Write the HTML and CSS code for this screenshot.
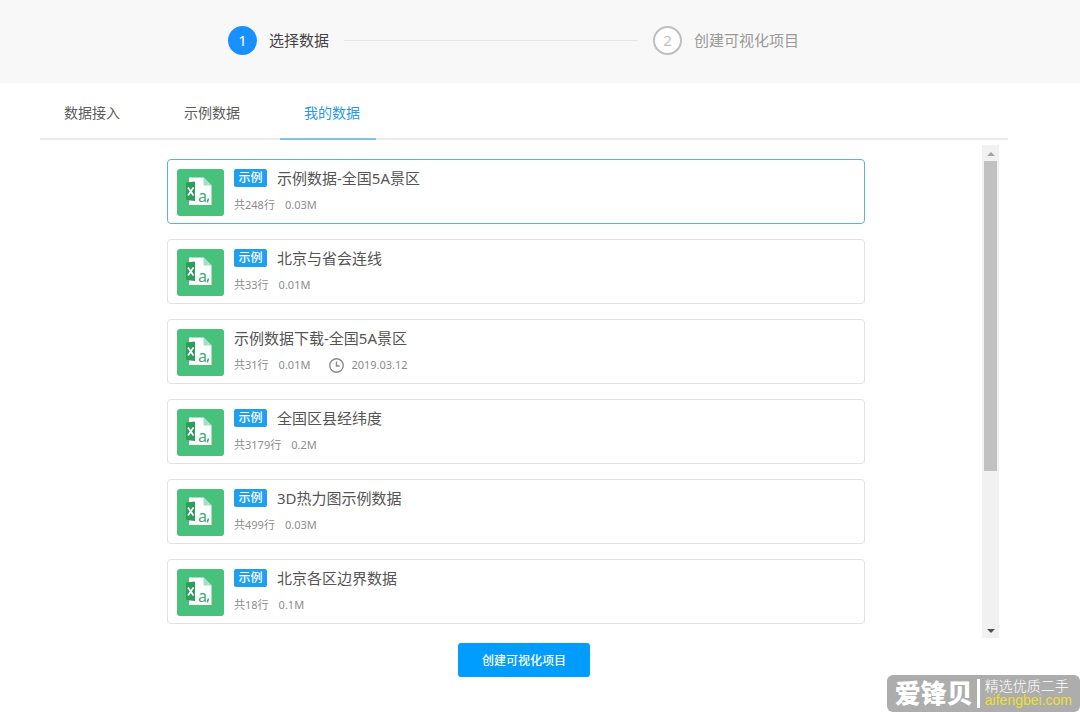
FILE: index.html
```html
<!DOCTYPE html>
<html lang="zh-CN">
<head>
<meta charset="utf-8">
<meta name="viewport" content="width=device-width, initial-scale=1">
<title>选择数据</title>
<link rel="stylesheet" href="styles.css">
</head>
<body>
<svg class="defs" aria-hidden="true">
  <symbol id="sheet" viewBox="0 0 47 47">
    <rect width="47" height="47" rx="3" fill="#48c17c"/>
    <path d="M12 8.500H26.500L34.500 16.500V36H12Z" fill="#fff"/>
    <path d="M26.500 8.500L34.500 16.500H26.500Z" fill="#a5dfbe"/>
    <path d="M9 13.500L18 12.500V32L9 31Z" fill="#2e9e5b"/>
    <path d="M11 18.500L16.500 26.500M16.500 18.500L11 26.500" stroke="#fff" stroke-width="1.700" fill="none"/>
    <text class="sheet-text" x="21" y="33">a</text>
    <path d="M31.500 29.500L30.300 33.500" stroke="#48a873" stroke-width="1.500"/>
  </symbol>
</svg>

<header class="header">
  <ol class="steps">
    <li class="step step-current"><span class="step-num">1</span><span>选择数据</span></li>
    <li class="step-line" aria-hidden="true"></li>
    <li class="step"><span class="step-num">2</span><span>创建可视化项目</span></li>
  </ol>
</header>

<main class="main">
  <nav class="tabs" role="tablist">
    <button class="tab" type="button" role="tab">数据接入</button>
    <button class="tab" type="button" role="tab">示例数据</button>
    <button class="tab tab-active" type="button" role="tab" aria-selected="true">我的数据</button>
  </nav>

  <section class="panel">
    <ul class="list">
      <li><button class="card card-selected" type="button">
        <svg class="file"><use href="#sheet"/></svg>
        <span class="info">
          <span class="title"><span class="badge">示例</span><span>示例数据-全国5A景区</span></span>
          <span class="meta"><span>共248行</span><span>0.03M</span></span>
        </span>
      </button></li>
      <li><button class="card" type="button">
        <svg class="file"><use href="#sheet"/></svg>
        <span class="info">
          <span class="title"><span class="badge">示例</span><span>北京与省会连线</span></span>
          <span class="meta"><span>共33行</span><span>0.01M</span></span>
        </span>
      </button></li>
      <li><button class="card" type="button">
        <svg class="file"><use href="#sheet"/></svg>
        <span class="info">
          <span class="title"><span>示例数据下载-全国5A景区</span></span>
          <span class="meta"><span>共31行</span><span>0.01M</span>
            <span class="date">
              <svg class="clock" viewBox="0 0 14 14"><circle cx="7" cy="7" r="6.300"/><path d="M7 3.200V7.500H10"/></svg>
              <span>2019.03.12</span>
            </span>
          </span>
        </span>
      </button></li>
      <li><button class="card" type="button">
        <svg class="file"><use href="#sheet"/></svg>
        <span class="info">
          <span class="title"><span class="badge">示例</span><span>全国区县经纬度</span></span>
          <span class="meta"><span>共3179行</span><span>0.2M</span></span>
        </span>
      </button></li>
      <li><button class="card" type="button">
        <svg class="file"><use href="#sheet"/></svg>
        <span class="info">
          <span class="title"><span class="badge">示例</span><span>3D热力图示例数据</span></span>
          <span class="meta"><span>共499行</span><span>0.03M</span></span>
        </span>
      </button></li>
      <li><button class="card" type="button">
        <svg class="file"><use href="#sheet"/></svg>
        <span class="info">
          <span class="title"><span class="badge">示例</span><span>北京各区边界数据</span></span>
          <span class="meta"><span>共18行</span><span>0.1M</span></span>
        </span>
      </button></li>
    </ul>
    <div class="scrollbar" aria-hidden="true">
      <svg class="arrow arrow-up" viewBox="0 0 8 4"><path d="M0 4L4 0L8 4Z"/></svg>
      <div class="track"><div class="thumb"></div></div>
      <svg class="arrow" viewBox="0 0 8 4"><path d="M0 0L4 4L8 0Z"/></svg>
    </div>
  </section>

  <button class="create" type="button">创建可视化项目</button>
</main>

<aside class="mark">
  <strong class="mark-name">爱锋贝</strong>
  <div class="mark-side">
    <span class="mark-slogan">精选优质二手</span>
    <span class="mark-site">aifengbei.com</span>
  </div>
</aside>
</body>
</html>
```
FILE: styles.css
```css
* {
  box-sizing: border-box;
}

body {
  margin: 0;
  background: #fff;
  color: #555;
  font-family: "Noto Sans", "Noto Sans CJK SC", sans-serif;
}

button {
  border: 0;
  padding: 0;
  background: none;
  color: inherit;
  font: inherit;
  cursor: pointer;
}

ol,
ul {
  margin: 0;
  padding: 0;
  list-style: none;
}

.defs {
  display: none;
}

.header {
  padding: 25px 281px 28px 228px;
  background: #f8f8f8;
}

.steps {
  display: flex;
  align-items: center;
  gap: 15px;
}

.step {
  display: flex;
  align-items: center;
  gap: 12px;
  color: #999;
  font-size: 15px;
  line-height: 30px;
  white-space: nowrap;
}

.step-num {
  display: flex;
  align-items: center;
  justify-content: center;
  width: 29px;
  height: 29px;
  border: 2px solid #bfbfbf;
  border-radius: 50%;
  background: #fff;
  color: #bfbfbf;
}

.step-current {
  color: #444;
}

.step-current .step-num {
  border-color: #1890ff;
  background: #1890ff;
  color: #fff;
}

.step-line {
  flex: 1;
  height: 1px;
  background: #e6e6e6;
}

.main {
  display: flex;
  flex-direction: column;
  padding: 0 72px 35px 40px;
}

.tabs {
  display: flex;
  gap: 24px;
  border-bottom: 2px solid #ebebeb;
}

.tab {
  width: 96px;
  height: 57px;
  margin-bottom: -2px;
  padding: 2px 0 0 24px;
  border-bottom: 2px solid transparent;
  color: #5c5c5c;
  font-size: 14px;
  text-align: left;
  white-space: nowrap;
}

.tab-active {
  border-bottom-color: #7fc1ea;
  color: #2a98ea;
}

.panel {
  display: flex;
  margin: 5px 9px 0 0;
}

.list {
  display: flex;
  flex: 1;
  flex-direction: column;
  gap: 15px;
  padding: 14px 117px 14px 127px;
}

.card {
  display: flex;
  gap: 10px;
  width: 100%;
  padding: 9px 9px 7px;
  border: 1px solid #e2e2e2;
  border-radius: 4px;
  text-align: left;
}

.card-selected {
  border-color: #5fb0dc;
}

.file {
  width: 47px;
  height: 47px;
}

.sheet-text {
  fill: #48a873;
  font-family: "Noto Sans", sans-serif;
  font-size: 16px;
}

.info {
  display: flex;
  flex-direction: column;
  gap: 10px;
}

.title {
  display: flex;
  align-items: center;
  gap: 10px;
  font-size: 15px;
  line-height: 18px;
}

.badge {
  width: 33px;
  border-radius: 2px;
  background: #1e9ff2;
  color: #fff;
  font-size: 12px;
  font-weight: 500;
  text-align: center;
}

.meta {
  display: flex;
  align-items: center;
  gap: 10px;
  color: #8c8c8c;
  font-size: 11px;
  line-height: 16px;
}

.date {
  display: flex;
  align-items: center;
  gap: 7px;
  margin-left: 9px;
}

.clock {
  width: 15px;
  height: 15px;
  fill: none;
  stroke: #8c8c8c;
  stroke-width: 1.3;
}

.scrollbar {
  display: flex;
  flex-direction: column;
  align-items: center;
  width: 17px;
  padding: 7px 2px 5px;
  background: #f1f1f1;
}

.arrow {
  width: 8px;
  height: 4px;
  fill: #505050;
}

.arrow-up {
  fill: #a3a3a3;
}

.track {
  flex: 1;
  width: 100%;
  padding: 5px 0;
}

.thumb {
  height: 67%;
  background: #c1c1c1;
}

.create {
  align-self: center;
  height: 34px;
  margin-top: 5px;
  padding: 0 24px;
  border-radius: 3px;
  background: #009dff;
  color: #fff;
  font-size: 12px;
  font-weight: 500;
}

.mark {
  position: absolute;
  right: 0;
  bottom: 0;
  display: flex;
  align-items: center;
  gap: 4px;
  padding: 4px 8px;
  border-radius: 6px;
  background: #adadad;
  color: #fff;
}

.mark-name {
  font-size: 26px;
  font-weight: 900;
  line-height: 25px;
}

.mark-side {
  display: flex;
  flex-direction: column;
  padding-left: 5px;
  border-left: 3px solid #fff;
}

.mark-slogan {
  font-size: 14px;
  font-weight: 300;
  line-height: 14px;
}

.mark-site {
  color: #ecdf2c;
  font-family: "Liberation Sans", Arial, sans-serif;
  font-size: 14px;
  line-height: 15px;
}
```
